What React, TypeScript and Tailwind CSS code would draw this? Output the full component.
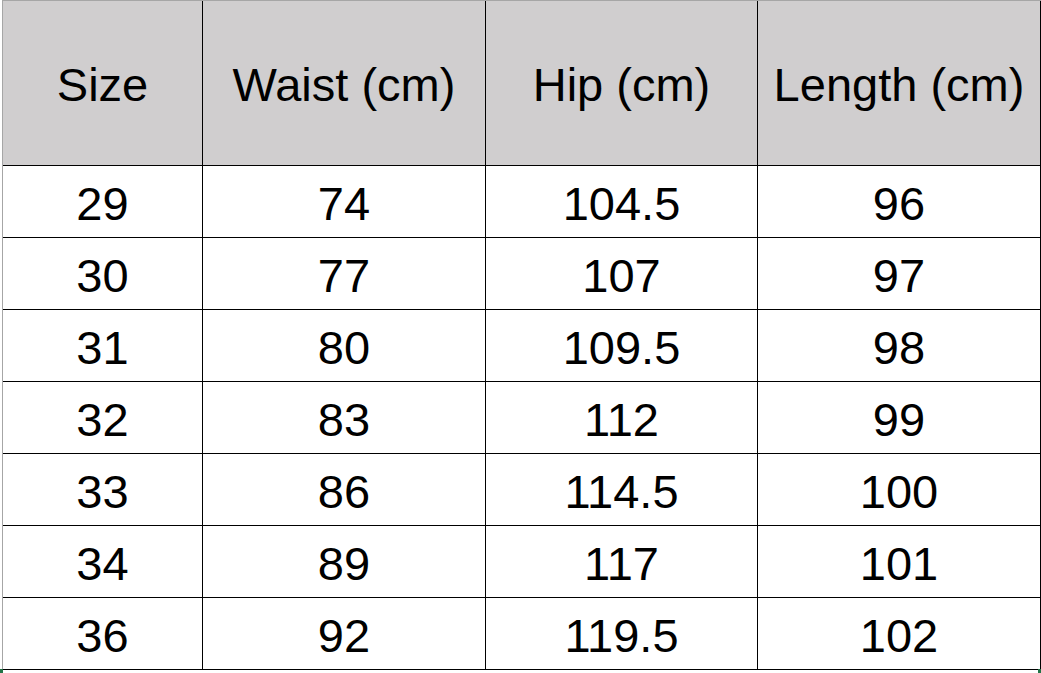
const header = ['Size', 'Waist (cm)', 'Hip (cm)', 'Length (cm)']

const rows = [
  ['29', '74', '104.5', '96'],
  ['30', '77', '107', '97'],
  ['31', '80', '109.5', '98'],
  ['32', '83', '112', '99'],
  ['33', '86', '114.5', '100'],
  ['34', '89', '117', '101'],
  ['36', '92', '119.5', '102'],
]

const cols = 'grid grid-cols-[200px_283px_272px_283px]'

export default function App() {
  return (
    <div
      className="relative h-[673px] w-[1041px] overflow-hidden bg-white pl-[2px] text-black"
      style={{ fontFamily: '"Liberation Sans", Arial, sans-serif' }}
    >
      <div className="border-l border-t border-l-[#a6a6a6] border-t-[#a6a6a6]">
        {/* header */}
        <div className={`${cols} h-[165px] border-b border-black bg-[#d0cecf]`}>
          {header.map((h) => (
            <div
              key={h}
              className="flex items-center justify-center border-r border-black pt-[3px] text-[47px] leading-none"
            >
              {h}
            </div>
          ))}
        </div>

        {/* body */}
        {rows.map((r, i) => (
          <div key={i} className={`${cols} h-[72px] border-b border-black`}>
            {r.map((v, j) => (
              <div
                key={j}
                className="flex items-center justify-center border-r border-black pt-[3px] text-[47px] leading-none"
              >
                {v}
              </div>
            ))}
          </div>
        ))}
      </div>

      <div className="absolute bottom-0 left-0 h-[4px] w-[3px] bg-[#217346]" />
      <div className="absolute bottom-0 right-0 h-[4px] w-[3px] bg-[#217346]" />
    </div>
  )
}
